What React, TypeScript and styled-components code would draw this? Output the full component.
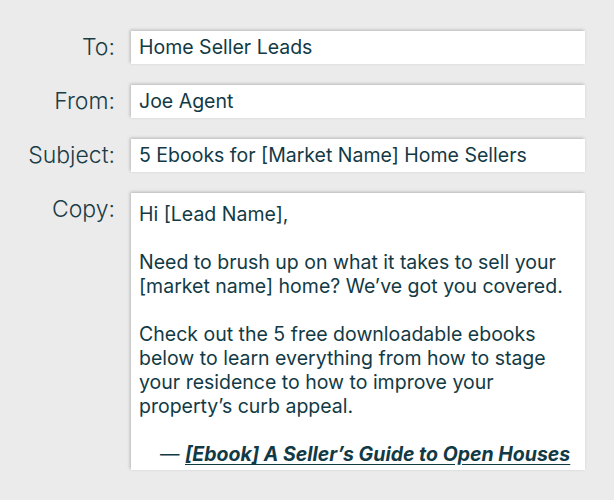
import React from "react";
import styled, { createGlobalStyle } from "styled-components";

const GlobalStyle = createGlobalStyle`
  html, body {
    margin: 0;
    padding: 0;
    background: #ebebeb;
  }
  body {
    font-family: "Inter", "Liberation Sans", sans-serif;
    color: #123a45;
  }
`;

const Page = styled.div`
  width: 614px;
  height: 500px;
  box-sizing: border-box;
  padding-top: 31px;
  overflow: hidden;
`;

const Form = styled.div`
  display: grid;
  grid-template-columns: 115px 454px;
  column-gap: 16px;
  row-gap: 21px;
`;

const Label = styled.div`
  text-align: right;
  font-size: 23px;
  font-weight: 300;
  line-height: 33px;
  color: #1a3c47;
`;

const Field = styled.div<{ $tall?: boolean }>`
  background: #fff;
  box-shadow: -1px -1px 3px rgba(0, 0, 0, 0.22);
  box-sizing: border-box;
  height: ${(p) => (p.$tall ? "277px" : "33px")};
  padding: ${(p) => (p.$tall ? "9px 8px 0" : "0 8px")};
  font-size: 19.5px;
  line-height: ${(p) => (p.$tall ? "24px" : "33px")};
  color: #123a45;
  overflow: hidden;
`;

const Para = styled.p`
  margin: 0 0 24px;
`;

const LinkLine = styled.p`
  margin: 0;
  padding-left: 21px;
  white-space: nowrap;
`;

const Link = styled.a`
  font-weight: 700;
  font-style: italic;
  color: #123a45;
  text-decoration: underline;
  text-underline-offset: 3px;
`;

export default function App() {
  return (
    <>
      <GlobalStyle />
      <Page>
        <Form>
          <Label>To:</Label>
          <Field>Home Seller Leads</Field>
          <Label>From:</Label>
          <Field>Joe Agent</Field>
          <Label>Subject:</Label>
          <Field>5 Ebooks for [Market Name] Home Sellers</Field>
          <Label>Copy:</Label>
          <Field $tall>
            <Para>Hi [Lead Name],</Para>
            <Para>
              Need to brush up on what it takes to sell your
              <br />
              [market name] home? We’ve got you covered.
            </Para>
            <Para>
              Check out the 5 free downloadable ebooks
              <br />
              below to learn everything from how to stage
              <br />
              your residence to how to improve your
              <br />
              property’s curb appeal.
            </Para>
            <LinkLine>
              — <Link>[Ebook] A Seller’s Guide to Open Houses</Link>
            </LinkLine>
          </Field>
        </Form>
      </Page>
    </>
  );
}
